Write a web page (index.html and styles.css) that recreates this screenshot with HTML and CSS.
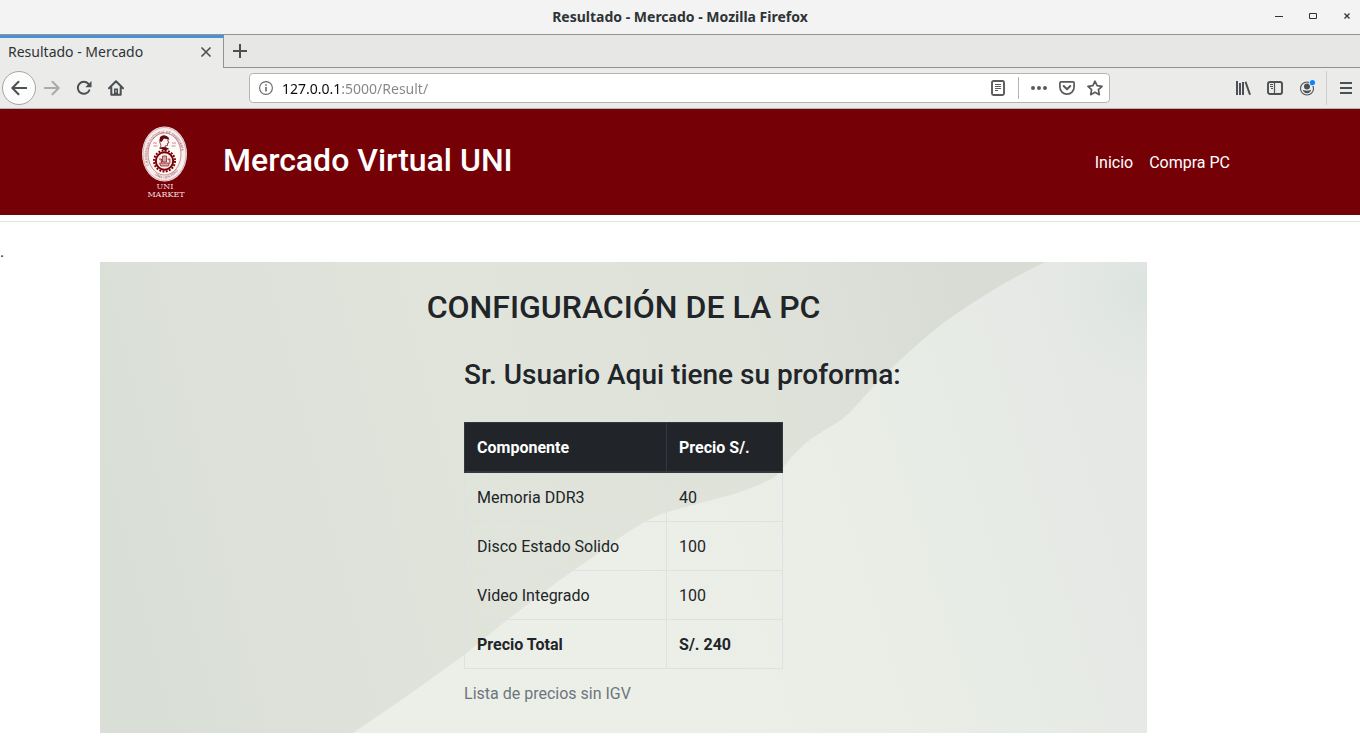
FILE: index.html
```html
<!DOCTYPE html>
<html lang="es">
<head>
<meta charset="utf-8">
<title>Resultado - Mercado</title>
<link rel="stylesheet" href="styles.css">
</head>
<body>
<div class="browser">
  <div class="titlebar">
    <span class="titlebar-text">Resultado - Mercado - Mozilla Firefox</span>
    <div class="window-controls">
      <button class="icon-btn" aria-label="Minimizar"><svg width="10" height="10" viewBox="0 0 10 10"><path d="M1 4.500h8" stroke="#2e3436"/></svg></button>
      <button class="icon-btn" aria-label="Maximizar"><svg width="10" height="10" viewBox="0 0 10 10"><path d="M1.500 1.500h7v5h-7z" fill="none" stroke="#2e3436"/></svg></button>
      <button class="icon-btn" aria-label="Cerrar ventana"><svg width="10" height="10" viewBox="0 0 10 10"><path d="M2.500 1.500l5 5m0-5l-5 5" stroke="#2e3436" stroke-width="1.300"/></svg></button>
    </div>
  </div>
  <div class="tabstrip">
    <div class="tab">
      <span>Resultado - Mercado</span>
      <button class="icon-btn" aria-label="Cerrar pestaña"><svg width="12" height="12" viewBox="0 0 12 12"><path d="M1.500 1.500l9 9m0-9l-9 9" stroke="#4a5053" stroke-width="1.600"/></svg></button>
    </div>
    <button class="icon-btn tab-new" aria-label="Nueva pestaña"><svg width="14" height="14" viewBox="0 0 14 14"><path d="M7 0v14M0 7h14" stroke="#4a5053" stroke-width="2"/></svg></button>
  </div>
  <div class="toolbar">
    <div class="toolbar-nav">
      <button class="icon-btn back" aria-label="Atrás"><svg width="16" height="16" viewBox="0 0 16 16"><path d="M15.300 8H1.500M7.500 1.800L1.300 8l6.200 6.200" fill="none" stroke="#4a5053" stroke-width="2" stroke-linecap="round" stroke-linejoin="round"/></svg></button>
      <button class="icon-btn" aria-label="Adelante"><svg width="16" height="16" viewBox="0 0 16 16"><path d="M.700 8h13.800M8.500 1.800L14.700 8l-6.200 6.200" fill="none" stroke="#a9abaa" stroke-width="2" stroke-linecap="round" stroke-linejoin="round"/></svg></button>
      <button class="icon-btn" aria-label="Recargar"><svg width="16" height="16" viewBox="0 0 16 16"><path d="M13.300 10.300A6 6 0 1 1 12.400 3.900" fill="none" stroke="#4a5053" stroke-width="2" stroke-linecap="round"/><path d="M15.500 1v6.200H9.300z" fill="#4a5053"/></svg></button>
      <button class="icon-btn" aria-label="Inicio del navegador"><svg width="16" height="16" viewBox="0 0 16 16"><path d="M1 8.300L8 1.300l7 7M3.300 7.500v7.300h9.400V7.500" fill="none" stroke="#4a5053" stroke-width="2" stroke-linecap="round" stroke-linejoin="round"/><path d="M6 8.500h4V15H6z" fill="#4a5053"/><path d="M8 10.200v2.200" stroke="#ebebea"/></svg></button>
    </div>
    <div class="urlbar">
      <svg width="14" height="14" viewBox="0 0 14 14"><circle cx="7" cy="7" r="6.400" fill="none" stroke="#666" stroke-width="1.100"/><path d="M7 6v4.500M7 3.200v1.600" stroke="#666" stroke-width="1.600"/></svg>
      <input class="url" type="text" aria-label="Dirección" value="127.0.0.1:5000/Result/">
      <button class="icon-btn" aria-label="Vista de lectura"><svg width="16" height="16" viewBox="0 0 16 16"><rect x="2" y="1" width="12" height="14" rx="1.500" fill="none" stroke="#5a5a5a" stroke-width="1.900"/><path d="M5 4.500h6M5 6.500h6M5 8.500h6M5 10.500h3" stroke="#5a5a5a"/></svg></button>
      <span class="divider"></span>
      <button class="icon-btn" aria-label="Acciones de página"><svg width="16" height="16" viewBox="0 0 16 16"><g fill="#5a5a5a"><circle cx="2" cy="8" r="2"/><circle cx="8" cy="8" r="2"/><circle cx="14" cy="8" r="2"/></g></svg></button>
      <button class="icon-btn" aria-label="Guardar en Pocket"><svg width="16" height="16" viewBox="0 0 16 16"><path d="M2 1.900h12q1.100 0 1.100 1.100v4.100a7.100 7.100 0 0 1-14.200 0V3q0-1.100 1.100-1.100z" fill="none" stroke="#5a5a5a" stroke-width="1.700"/><path d="M4.700 6L8 9.200 11.300 6" fill="none" stroke="#5a5a5a" stroke-width="2" stroke-linecap="round" stroke-linejoin="round"/></svg></button>
      <button class="icon-btn" aria-label="Añadir a marcadores"><svg width="16" height="16" viewBox="0 0 16 16"><path d="M8 1.200l2.100 4.500 4.900.600-3.600 3.400.900 5L8 12.300l-4.300 2.400.900-5L1 6.300l4.900-.600z" fill="none" stroke="#5a5a5a" stroke-width="1.700" stroke-linejoin="round"/></svg></button>
    </div>
    <div class="toolbar-tools">
      <button class="icon-btn" aria-label="Catálogo"><svg width="16" height="16" viewBox="0 0 16 16"><path d="M2 1v14M5 3v12M8 2v13M10.500 1.700L15 14.800" fill="none" stroke="#4a5053" stroke-width="2"/></svg></button>
      <button class="icon-btn" aria-label="Barra lateral"><svg width="16" height="16" viewBox="0 0 16 16"><rect x="1" y="2" width="14" height="12" rx="2" fill="none" stroke="#4a5053" stroke-width="1.900"/><path d="M7.500 2v12" stroke="#4a5053" stroke-width="1.200"/><path d="M3 4.500h3M3 6.500h3M4 8.500h2" stroke="#4a5053"/></svg></button>
      <button class="icon-btn" aria-label="Cuenta"><svg width="16" height="16" viewBox="0 0 16 16"><circle cx="8" cy="8.500" r="6.500" fill="none" stroke="#4a5053" stroke-width="1.100"/><circle cx="8" cy="6.500" r="3" fill="#4a5053"/><path d="M3.800 9.800q4.200 2 8.400 0-.800 3.400-4.200 3.400t-4.200-3.400z" fill="#4a5053"/><circle cx="13.500" cy="2.700" r="3.300" fill="#ebebea"/><circle cx="13.500" cy="2.700" r="2.600" fill="#0a84ff"/></svg></button>
    </div>
    <button class="icon-btn menu" aria-label="Menú"><svg width="12" height="12" viewBox="0 0 12 12"><path d="M0 1h12M0 6h12M0 11h12" stroke="#4a5053" stroke-width="2"/></svg></button>
  </div>
</div>

<header class="site-header">
  <div class="header-inner">
    <svg class="logo" width="48" height="76" viewBox="0 0 48 76" role="img" aria-label="UNI Market">
      <defs><path id="ring" d="M9 44A17.500 22.500 0 1 1 38 44"/><path id="base" d="M10 47Q23.500 62 37 47"/></defs>
      <ellipse cx="23.500" cy="30" rx="22.500" ry="27.500" fill="#f8eeee"/>
      <ellipse cx="23.500" cy="30" rx="21.500" ry="26.500" fill="none" stroke="#b76b70" stroke-width=".5"/>
      <ellipse cx="23.500" cy="30" rx="16.500" ry="21" fill="#fff9f8" stroke="#a44a50" stroke-width=".6"/>
      <text class="logo-ring"><textPath href="#ring" startOffset="3">UNIVERSIDAD NACIONAL DE INGENIERIA</textPath></text>
      <text class="logo-ring"><textPath href="#base" startOffset="5">LIMA 1876 PERU</textPath></text>
      <path d="M20 21.500q-2-3-.700-6.400 1.300-3 4.600-3.100 3.300.200 4 3.400l-1.200.800 1.200 2.700-1.500.400.200 2.300-2.600.300.300 2.600h-5.500z" fill="#fff4f2" stroke="#7a1118" stroke-width=".8"/>
      <path d="M19 13q4-4 9 1l-1 1.500-4-1-2.500 3.500-2-1zM18.500 24q5-2.500 10 1l-5 1.500z" fill="#5e0a10"/>
      <path d="M12 19h4M12.500 22h4M31 19h4M30.500 22h4" stroke="#c98a8e" stroke-width="1"/>
      <circle cx="23.500" cy="37" r="10.500" fill="none" stroke="#7a0006" stroke-width="2" stroke-dasharray="1.900 1.399"/>
      <circle cx="23.500" cy="37" r="8.700" fill="#fbf0ee" stroke="#7a0006" stroke-width="2"/>
      <path d="M18.500 39h10l-1.200 3h-7.600zM21.500 32h4v6h-4zM18 35h2.500v4M26.500 35H29v4" fill="#d9a5a6" stroke="#84151b" stroke-width=".7"/>
      <text class="logo-text" x="24" y="65">UNI</text>
      <text class="logo-text" x="25" y="73">MARKET</text>
    </svg>
    <span class="brand">Mercado Virtual UNI</span>
    <nav class="site-nav"><a href="#">Inicio</a><a href="#">Compra PC</a></nav>
  </div>
</header>
<hr class="rule">
<p class="dot">.</p>

<main class="panel">
  <svg class="panel-art" viewBox="0 0 1047 471" preserveAspectRatio="none" aria-hidden="true">
    <defs>
      <linearGradient id="shade" gradientUnits="userSpaceOnUse" x1="0" y1="240" x2="960" y2="0"><stop offset="0" stop-color="#d9ded7"/><stop offset=".16" stop-color="#dde1da"/><stop offset=".38" stop-color="#e0e4da"/><stop offset=".68" stop-color="#dfe2d9"/><stop offset=".9" stop-color="#d9dcd5"/></linearGradient>
      <linearGradient id="light" gradientUnits="userSpaceOnUse" x1="550" y1="400" x2="1047" y2="250"><stop offset="0" stop-color="#ecefe8"/><stop offset=".5" stop-color="#e9ede6"/><stop offset="1" stop-color="#e5e8e5"/></linearGradient>
      <radialGradient id="corner" gradientUnits="userSpaceOnUse" cx="1047" cy="30" r="90"><stop offset="0" stop-color="#dce4df"/><stop offset="1" stop-color="#dce4df" stop-opacity="0"/></radialGradient>
    </defs>
    <path d="M0 0h1047v471H0z" fill="url(#shade)"/>
    <path d="M945 0Q918 13 893 28Q868 43 843 61Q818 81 797 101Q786 111 773 125L752 148Q745 156 730 165Q716 173 707 180Q695 190 684 204Q680 212 671 217Q649 228 623 235L567 250Q554 254 543 261Q525 271 507 285L453 323L407 358L364 393L307 434L253 471H1047V0z" fill="url(#light)"/>
    <path d="M945 0L900 170H1047V0z" fill="url(#corner)"/>
  </svg>
  <h1 class="panel-title">CONFIGURACIÓN DE LA PC</h1>
  <section class="quote">
    <h2 class="quote-title">Sr. Usuario Aqui tiene su proforma:</h2>
    <table class="prices">
      <caption>Lista de precios sin IGV</caption>
      <thead><tr><th scope="col">Componente</th><th scope="col">Precio S/.</th></tr></thead>
      <tbody>
        <tr><td>Memoria DDR3</td><td>40</td></tr>
        <tr><td>Disco Estado Solido</td><td>100</td></tr>
        <tr><td>Video Integrado</td><td>100</td></tr>
        <tr class="total"><td>Precio Total</td><td>S/. 240</td></tr>
      </tbody>
    </table>
  </section>
</main>
</body>
</html>
```
FILE: styles.css
```css
* { box-sizing: border-box; }

body {
  margin: 0;
  background: #fff;
  color: #212529;
  font: 16px/24px Roboto, sans-serif;
}

svg { display: block; flex: none; }

/* Browser window */
.browser {
  font: 14px/20px "Noto Sans", sans-serif;
  color: #2e3436;
  background: #ebebea;
}

.icon-btn {
  display: flex;
  align-items: center;
  justify-content: center;
  padding: 0;
  border: 0;
  background: none;
}

.titlebar {
  display: grid;
  grid-template-columns: 1fr auto 1fr;
  align-items: center;
  height: 35px;
  background: #f3f3f3;
  border-bottom: 1px solid #94968c;
}

.titlebar-text {
  grid-column: 2;
  font-weight: 700;
}

.window-controls {
  display: flex;
  justify-content: flex-end;
  gap: 24px;
  padding-right: 8px;
}

.tabstrip {
  display: flex;
  height: 33px;
  background: #e7e7e5;
  box-shadow: inset 0 -1px #929292;
}

.tab {
  display: flex;
  align-items: center;
  justify-content: space-between;
  width: 224px;
  padding: 0 11px 2px 8px;
  background: #ebebea;
  border-top: 3px solid #4a90d9;
  border-right: 1px solid #929292;
}

.tab-new { padding: 0 9px 2px; }

.toolbar {
  display: flex;
  align-items: center;
  height: 41px;
  border-bottom: 1px solid #b3b5b0;
}

.toolbar-nav {
  display: flex;
  align-items: center;
  gap: 16px;
  width: 249px;
  padding-left: 2px;
}

.back {
  width: 34px;
  height: 34px;
  margin-right: -8px;
  border: 1px solid #a5a5a5;
  border-radius: 50%;
  background: #fcfcfc;
}

.urlbar {
  display: flex;
  align-items: center;
  gap: 12px;
  flex: 1;
  height: 30px;
  padding: 0 6px 0 9px;
  background: #fff;
  border: 1px solid #b5b5b5;
  border-radius: 4px;
}

.url {
  flex: 1;
  min-width: 0;
  margin-left: -3px;
  padding: 1px 0 0;
  border: 0;
  outline: 0;
  font: inherit;
  color: transparent;
  background: linear-gradient(to right, #0c0c0d 59px, #858585 59px);
  -webkit-background-clip: text;
  background-clip: text;
}

.divider {
  width: 1px;
  height: 22px;
  background: #b5b5b5;
}

.toolbar-tools {
  display: flex;
  gap: 16px;
  padding: 0 11px 0 125px;
}

.menu {
  height: 34px;
  padding: 0 8px 0 13px;
  border-left: 1px solid #cfcfce;
}

/* Site header */
.site-header {
  background: #750006;
  color: #fff;
}

.header-inner {
  display: flex;
  align-items: center;
  max-width: 1140px;
  min-height: 106px;
  margin: 0 auto;
  padding: 0 20px 0 31px;
}

.brand {
  margin-left: 34px;
  padding-bottom: 4px;
  font-size: 32px;
  font-weight: 500;
  line-height: 40px;
}

.logo-ring {
  fill: #8c262c;
  font: 3px "DejaVu Serif", serif;
}

.logo-text {
  fill: #f3dedf;
  font: 8px "DejaVu Serif", serif;
  text-anchor: middle;
}

.site-nav {
  display: flex;
  gap: 16px;
  margin-left: auto;
  padding-top: 2px;
}

.site-nav a {
  color: #fff;
  text-decoration: none;
}

.rule {
  margin: 6px 0 0;
  border: 0;
  border-top: 1px solid #e5e5e5;
}

.dot {
  margin: 20px 0 0;
  line-height: 20px;
}

/* Quote panel */
.panel {
  position: relative;
  width: 77%;
  margin-left: 100px;
  padding: 26px 0 28px;
}

.panel-art {
  position: absolute;
  inset: 0;
  z-index: -1;
  width: 100%;
  height: 100%;
}

.panel-title {
  margin: 0;
  text-align: center;
  font-size: 32px;
  font-weight: 500;
  line-height: 38px;
}

.quote {
  margin-left: 33.333%;
  padding: 32px 15px 0;
}

.quote-title {
  margin: 0 0 30px;
  font-size: 28px;
  font-weight: 500;
  line-height: 34px;
}

.prices {
  width: 319px;
  border-collapse: collapse;
  caption-side: bottom;
}

.prices caption {
  padding-top: 13px;
  margin-bottom: -1px;
  color: #6c757d;
  text-align: left;
}

.prices th,
.prices td {
  padding: 13px 12px 11px;
  border: 1px solid #dee0e6;
  text-align: left;
}

.prices th {
  border-color: #32383e;
  border-bottom-width: 2px;
  background: #212529;
  color: #fff;
  font-weight: 700;
}

.prices th:first-child { width: 202px; }

.total { font-weight: 700; }
```
